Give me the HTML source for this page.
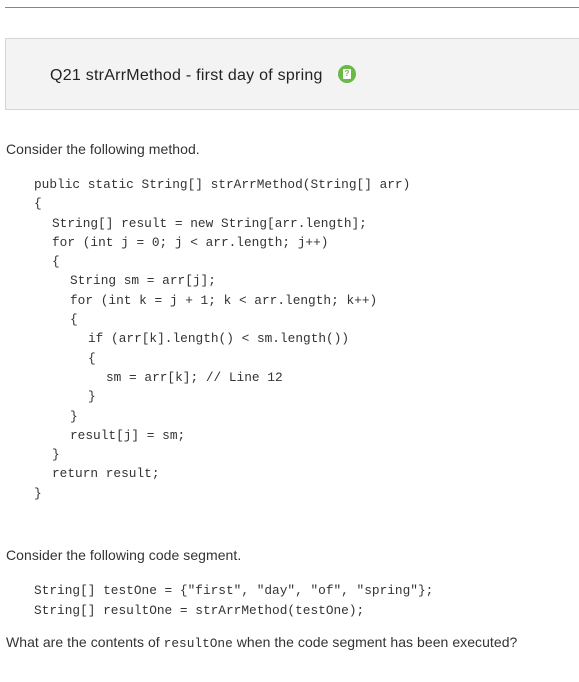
<!DOCTYPE html>
<html><head><style>
body{margin:0;width:579px;height:682px;background:#fff;position:relative;overflow:hidden;font-family:"Liberation Sans",sans-serif;color:#333}
.t{position:absolute;white-space:pre}
.p{font-size:14px;letter-spacing:0.05px;color:#333}
.c{font-family:"Liberation Mono",monospace;font-size:12.8px;color:#333}
.c2{font-family:"Liberation Mono",monospace;font-size:12.8px;color:#333}
.code{position:absolute;white-space:nowrap}
.code div{height:19.3px;white-space:pre}
.i1{padding-left:18px}.i2{padding-left:36px}.i3{padding-left:54px}.i4{padding-left:72px}
</style></head><body>
<div style="position:absolute;left:5px;top:7px;width:574px;height:1px;background:#6a8fa8"></div>
<div style="position:absolute;left:5px;top:38px;width:580px;height:70px;background:#f3f3f3;border:1px solid #d5d5d5"></div>
<div class="t" style="left:50px;top:67px;font-size:16px;letter-spacing:0.25px;color:#222">Q21 strArrMethod - first day of spring</div>
<div style="position:absolute;left:338px;top:65px;width:18px;height:18px;border-radius:50%;background:#6ab846"></div>
<div style="position:absolute;left:343px;top:69px;width:8px;height:10px;background:#fff;border-radius:1px;font:bold 8px 'Liberation Sans';color:#6ab846;text-align:center;line-height:10px">?</div>
<div class="t p" style="left:6px;top:141px">Consider the following method.</div>
<div class="c code" style="left:34px;top:175px;line-height:19.3px"><div>public static String[] strArrMethod(String[] arr)</div><div>{</div><div class="i1">String[] result = new String[arr.length];</div><div class="i1">for (int j = 0; j &lt; arr.length; j++)</div><div class="i1">{</div><div class="i2">String sm = arr[j];</div><div class="i2">for (int k = j + 1; k &lt; arr.length; k++)</div><div class="i2">{</div><div class="i3">if (arr[k].length() &lt; sm.length())</div><div class="i3">{</div><div class="i4">sm = arr[k]; // Line 12</div><div class="i3">}</div><div class="i2">}</div><div class="i2">result[j] = sm;</div><div class="i1">}</div><div class="i1">return result;</div><div>}</div></div>
<div class="t p" style="left:6px;top:547px">Consider the following code segment.</div>
<div class="t c2" style="left:34px;top:581px;line-height:19.5px">String[] testOne = {"first", "day", "of", "spring"};
String[] resultOne = strArrMethod(testOne);</div>
<div class="t p" style="left:6px;top:634px">What are the contents of <span class="c2" style="letter-spacing:0">resultOne</span> when the code segment has been executed?</div>
</body></html>
